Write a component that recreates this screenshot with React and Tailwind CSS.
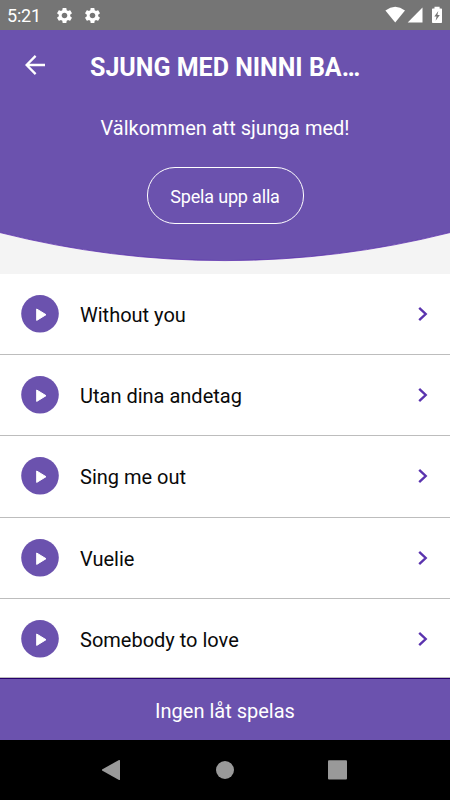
import { MdSettings } from 'react-icons/md'

const SONGS = ['Without you', 'Utan dina andetag', 'Sing me out', 'Vuelie', 'Somebody to love']

function StatusBar() {
  return (
    <div className="flex h-[30px] shrink-0 items-center bg-[#757575] pl-[7px] text-white">
      <span className="w-[48px] pt-[2px] text-[18px] leading-[30px] tracking-[-0.2px]">5:21</span>
      <MdSettings className="size-[19px]" />
      <MdSettings className="ml-[9px] size-[19px]" />
      <svg className="ml-auto" width="65" height="30" viewBox="385 0 65 30" fill="currentColor">
        <path d="M385.4 10.5 Q395.2 3.2 405 10.5 L395.2 22.5 Z" />
        <path d="M422.5 7.5 V22.5 H407.7 Z" />
        <path d="M432.8 8.5 H434.5 V6.8 H439.6 V8.5 H441.3 Q442 8.5 442 9.3 V22.2 Q442 23 441.3 23 H432.8 Q432 23 432 22.2 V9.3 Q432 8.5 432.8 8.5 Z" />
        <path d="M438.3 11 L434.3 16.4 H436.6 L435.6 20.7 L439.8 15 H437.4 Z" fill="#757575" />
      </svg>
    </div>
  )
}

function Header() {
  return (
    <div className="relative isolate h-[244px] shrink-0 bg-[#f4f4f4] text-white">
      <svg className="absolute inset-0 -z-10" width="450" height="244" viewBox="0 0 450 244">
        <path d="M0 0 H450 V202.6 A918 918 0 0 1 0 202.6 Z" fill="#6b52ae" />
        <path d="M450 202.6 A918 918 0 0 1 0 202.6" fill="none" stroke="#5424aa" strokeWidth="0.7" />
      </svg>
      <div className="flex h-[72px] items-center pl-[25px]">
        <svg className="mb-[2px]" width="20" height="20" viewBox="0 0 20 20" fill="none" stroke="currentColor" strokeWidth="2.3">
          <path d="M10.6 0.9 L1.6 10 L10.6 19.1 M1.6 10 H20" />
        </svg>
        <h1 className="ml-[45px] w-[271px] truncate pt-[4px] text-[25px] leading-[36px] font-bold">
          SJUNG MED NINNI BA…
        </h1>
      </div>
      <p className="mt-[12px] text-center text-[20px] leading-[28px]">Välkommen att sjunga med!</p>
      <button className="mx-auto mt-[25px] block h-[57px] w-[157px] rounded-[28px] border border-white pt-[2px] text-[18px] tracking-[-0.18px]">
        Spela upp alla
      </button>
    </div>
  )
}

function SongRow({ title }) {
  return (
    <li className="flex h-[81.2px] shrink-0 items-center border-b border-[#bdbdbd] bg-white pl-[21px] last:h-[79.2px] last:pt-[1.5px]">
      <svg width="38" height="38" viewBox="0 0 38 38">
        <circle cx="19" cy="18.8" r="18.8" fill="#6b52ae" />
        <path d="M15.7 14 L25 19.7 L15.7 25.4 Z" fill="#fff" stroke="#fff" strokeWidth="1" strokeLinejoin="round" />
      </svg>
      <span className="ml-[21px] pt-[2px] text-[20px] leading-[28px] text-[#0a0a0a]">{title}</span>
      <svg className="mr-[22px] ml-auto" width="10" height="16" viewBox="0 0 10 16" fill="none" stroke="#5a33ae" strokeWidth="2.4">
        <path d="M1.2 1.8 L7.7 8 L1.2 14.2" />
      </svg>
    </li>
  )
}

function NavBar() {
  return (
    <div className="h-[60px] shrink-0 bg-black">
      <svg width="450" height="60" viewBox="0 0 450 60" fill="#999">
        <path d="M102 29.4 L119 20 Q120 19.6 120 20.6 V39.4 Q120 40.4 119 40 L102 30.6 Z" />
        <circle cx="225" cy="30" r="9" />
        <rect x="328" y="20.3" width="19" height="19.2" rx="1" />
      </svg>
    </div>
  )
}

export default function App() {
  return (
    <div className="flex h-[800px] w-[450px] flex-col overflow-hidden bg-white font-['Roboto',sans-serif]">
      <StatusBar />
      <Header />
      <ul className="flex h-[404px] shrink-0 flex-col overflow-hidden">
        {SONGS.map((title) => (
          <SongRow key={title} title={title} />
        ))}
      </ul>
      <div className="flex h-[62px] shrink-0 items-center justify-center border-t border-[#25006b] bg-[#6b52ae] pt-[3px] text-[20px] text-white">
        Ingen låt spelas
      </div>
      <NavBar />
    </div>
  )
}
